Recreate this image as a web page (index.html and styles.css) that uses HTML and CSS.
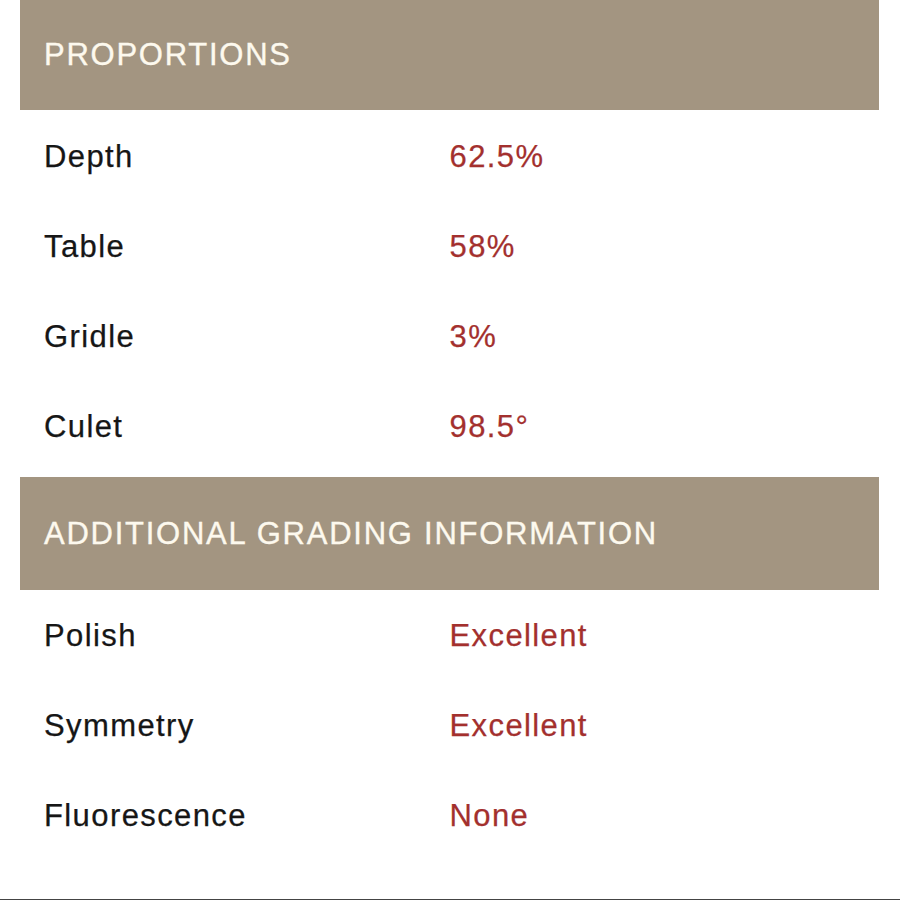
FILE: index.html
```html
<!DOCTYPE html>
<html>
<head>
<meta charset="utf-8">
<link rel="stylesheet" href="styles.css">
</head>
<body>
<div class="page">
  <section class="section first">
    <div class="section-head">PROPORTIONS</div>
    <div class="rows">
      <div class="row"><span class="label">Depth</span><span class="value">62.5%</span></div>
      <div class="row"><span class="label">Table</span><span class="value">58%</span></div>
      <div class="row"><span class="label">Gridle</span><span class="value">3%</span></div>
      <div class="row"><span class="label">Culet</span><span class="value">98.5°</span></div>
    </div>
  </section>
  <section class="section second">
    <div class="section-head">ADDITIONAL GRADING INFORMATION</div>
    <div class="rows">
      <div class="row"><span class="label">Polish</span><span class="value">Excellent</span></div>
      <div class="row"><span class="label">Symmetry</span><span class="value">Excellent</span></div>
      <div class="row"><span class="label">Fluorescence</span><span class="value">None</span></div>
    </div>
  </section>
</div>
</body>
</html>
```

FILE: styles.css
```css
html, body {
  margin: 0;
  padding: 0;
  background: #ffffff;
}
body {
  font-family: "Liberation Sans", Arial, sans-serif;
}
.page {
  box-sizing: border-box;
  height: 900px;
  border-bottom: 1px solid #444444;
  padding: 0 21px 0 20px;
}
.section-head {
  background: #a39581;
  color: #fdf9ee;
  font-size: 31px;
  letter-spacing: 1.75px;
  -webkit-text-stroke: 0.35px #fdf9ee;
  display: flex;
  align-items: center;
  padding-left: 24px;
}
.first .section-head {
  height: 110px;
}
.second .section-head {
  height: 113px;
  margin-top: 5px;
}
.rows {
  display: flex;
  flex-direction: column;
  padding: 0 24px;
}
.first .rows {
  padding-top: 2px;
}
.second .rows {
  padding-top: 1px;
}
.row {
  height: 90px;
  display: grid;
  grid-template-columns: 1fr 1fr;
  align-items: center;
  font-size: 31px;
  letter-spacing: 1.4px;
}
.label {
  color: #161616;
  -webkit-text-stroke: 0.25px #161616;
}
.value {
  color: #a3302e;
  -webkit-text-stroke: 0.25px #a3302e;
}
```
